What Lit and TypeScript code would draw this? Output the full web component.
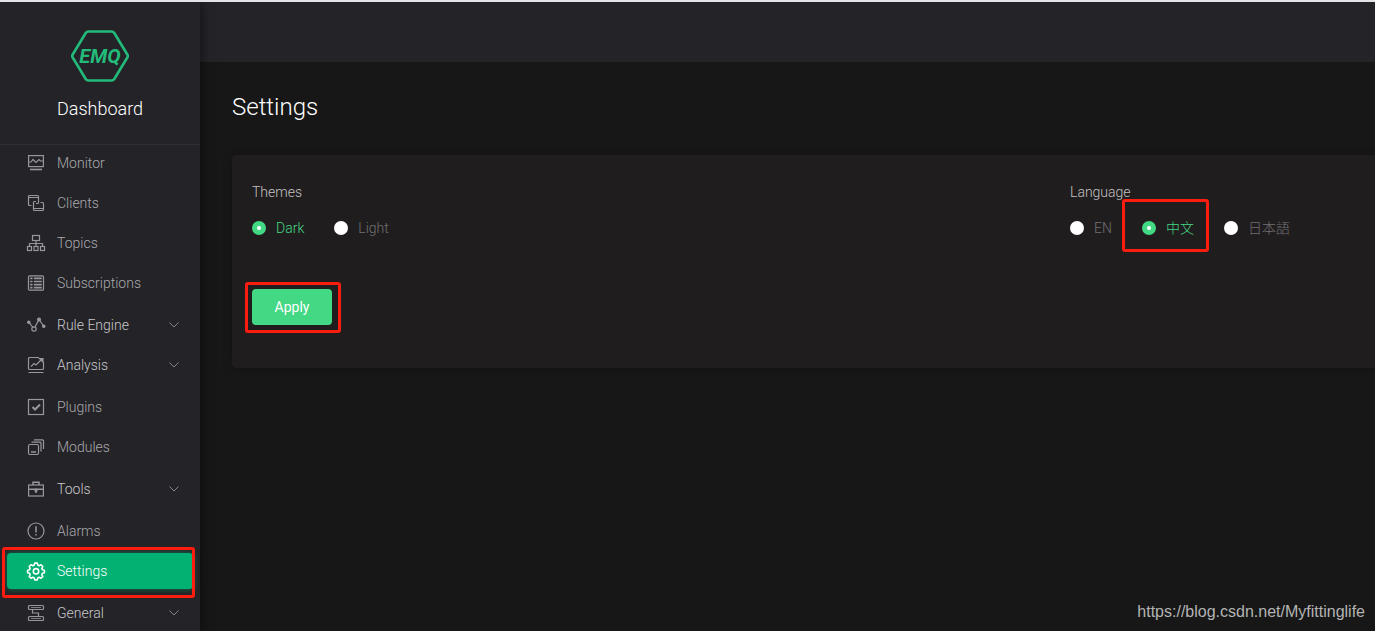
import { LitElement, html, css, svg } from "lit";
import { customElement, property, state } from "lit/decorators.js";
import { classMap } from "lit/directives/class-map.js";

const icons: Record<string, unknown> = {
  monitor: svg`<rect x=".6" y=".6" width="14.800" height="11"/><path d="M.6 7h2.400l2-2.500 3 3 3-3L12.500 6h3"/><path d="M2 14.500h12" stroke-width="1.600"/>`,
  clients: svg`<path d="M3.500 10.500h-2a1 1 0 0 1-1-1V1.500a1 1 0 0 1 1-1h8a1 1 0 0 1 1 1v6a1 1 0 0 1-1 1H8M.5 2.500h10"/><path d="M12.500 7.500h2a1 1 0 0 1 1 1v6a1 1 0 0 1-1 1h-8a1 1 0 0 1-1-1v-7a1 1 0 0 1 1-1H8M5.500 13.500h10"/>`,
  topics: svg`<rect x="4.500" y=".5" width="7" height="5"/><path d="M8 5.500v6M1.500 11.500v-3h13v3"/><rect x="-.5" y="11.500" width="4" height="4"/><rect x="6" y="11.500" width="4" height="4"/><rect x="12.500" y="11.500" width="4" height="4"/>`,
  subscriptions: svg`<rect x=".5" y=".8" width="15" height="14.400" rx="1"/><path d="M2.200 3.300h2.300M5.800 3.300h8M2.200 6.500h2.300M5.800 6.500h8M2.200 9.700h2.300M5.800 9.700h8M2.200 12.700h2.300M5.800 12.700h8" stroke-width="1.700"/>`,
  rule: svg`<path d="M.8 5.200L5 10.500M7 10l4-7.500 5 7"/><circle cx="6" cy="12" r="2.200"/><circle cx=".8" cy="5.200" r="1.200" fill="currentColor"/><circle cx="11" cy="2.500" r="1.400" fill="currentColor"/><circle cx="15.800" cy="9.200" r="1.200" fill="currentColor"/>`,
  analysis: svg`<path d="M11 .5H1.500a1 1 0 0 0-1 1v10a1 1 0 0 0 1 1h13a1 1 0 0 0 1-1V5M.5 15.500h15"/><path d="M3 9.500l3-3 2 1.500 5-5"/><path d="M11.500 1.500H15V5z" fill="currentColor"/>`,
  plugins: svg`<rect x=".5" y=".5" width="15" height="15"/><path d="M4.500 8l2.500 2.500 5-5" stroke-width="2"/>`,
  modules: svg`<rect x=".5" y="5.500" width="10" height="10" rx="1.500"/><path d="M3 13h5" stroke-width="1.500"/><path d="M3.500 3.200h8.500a1 1 0 0 1 1 1v8.300M6 .8h8.500a1 1 0 0 1 1 1V10"/>`,
  tools: svg`<rect x=".6" y="4" width="14.800" height="11"/><path d="M5 4V1.200h6V4M.5 8.300h15" stroke-width="1.500"/><path d="M6.500 9.800h3M8 7.500v4.500" stroke-width="1.600"/>`,
  alarms: svg`<circle cx="8" cy="8" r="8"/><path d="M8 3.200v6.300M8 11v1.600" stroke-width="1.500"/>`,
  settings: svg`<path d="M6.700.1h2.600l.5 2 1.300.6 1.900-1 1.800 1.800-1 1.900.6 1.300 2 .5v2.600l-2 .5-.6 1.300 1 1.900-1.800 1.800-1.900-1-1.300.6-.5 2H6.700l-.5-2-1.300-.6-1.900 1-1.800-1.800 1-1.900-.6-1.300-2-.5V7.200l2-.5.6-1.300-1-1.900L3 1.700l1.900 1 1.300-.6z" stroke-width="1.600" stroke-linejoin="round"/><circle cx="8" cy="8.300" r="2.700" stroke-width="1.600"/>`,
  general: svg`<rect x=".5" y=".5" width="15" height="4" rx="1"/><rect x=".5" y="11.500" width="15" height="4" rx="1"/><path d="M3 2.500h10M3 13.500h10" stroke-width=".8"/><path d="M4.500 4.500v3.500h6v3.500"/>`,
};

interface Item { label: string; icon: string; sub?: boolean; }
const groups: Item[][] = [
  [
    { label: "Monitor", icon: "monitor" },
    { label: "Clients", icon: "clients" },
    { label: "Topics", icon: "topics" },
    { label: "Subscriptions", icon: "subscriptions" },
  ],
  [
    { label: "Rule Engine", icon: "rule", sub: true },
    { label: "Analysis", icon: "analysis", sub: true },
  ],
  [
    { label: "Plugins", icon: "plugins" },
    { label: "Modules", icon: "modules" },
  ],
  [{ label: "Tools", icon: "tools", sub: true }],
  [
    { label: "Alarms", icon: "alarms" },
    { label: "Settings", icon: "settings" },
  ],
  [{ label: "General", icon: "general", sub: true }],
];

@customElement("side-bar")
class SideBar extends LitElement {
  @state() private current = "Settings";

  static styles = css`
    :host { display: block; background: #242328; box-shadow: 0 0 12px rgba(0, 0, 0, 0.6); z-index: 1; }
    .brand {
      display: flex; flex-direction: column; align-items: center; gap: 13px;
      box-sizing: border-box; height: 143px; padding-top: 28px; border-bottom: 1px solid #2f2e34;
    }
    .logo { width: 58px; height: 52px; display: block; }
    .logo-text { font: italic 700 20px Roboto, sans-serif; fill: #22bb7a; }
    .name { font-size: 18px; line-height: 28px; font-weight: 300; color: #fff; margin: 0; }
    nav { display: flex; flex-direction: column; gap: 6px; }
    ul { display: flex; flex-direction: column; gap: 4px; list-style: none; margin: 0; padding: 0; }
    li { padding: 0 7px; position: relative; }
    .item {
      display: flex; align-items: center; gap: 13px; width: 100%; height: 36px; box-sizing: border-box;
      padding: 0 14px 0 21px; border: 0; border-radius: 4px; background: none; cursor: pointer;
      font: 300 14px/20px Roboto, sans-serif; color: #a9a9ac; text-decoration: none; text-align: left;
    }
    .sub { color: #c8c8ca; }
    .active { background: #03b172; color: #fff; box-shadow: 0 0 6px rgba(3, 177, 114, 0.6); }
    .icon {
      width: 16px; height: 16px; flex: none; overflow: visible; fill: none;
      color: #97979c; stroke: currentColor; stroke-width: 1.200;
    }
    .active .icon { color: #fff; }
    .label { flex: 1; }
    .chevron { width: 10px; height: 6px; fill: none; stroke: #85858a; }
    .marked::after {
      content: ""; position: absolute; inset: -6px 5px -9px 2px; border: 3px solid #fd1d10;
      border-radius: 3px; pointer-events: none;
    }
  `;

  private renderItem(item: Item) {
    const active = item.label === this.current;
    const body = html`
      <svg class="icon" viewBox="0 0 16 16" aria-hidden="true">${icons[item.icon]}</svg>
      <span class="label">${item.label}</span>`;
    return html`<li class=${classMap({ marked: item.label === "Settings" })}>
      ${item.sub
        ? html`<button class="item sub" type="button" aria-expanded="false">${body}
            <svg class="chevron" viewBox="0 0 10 6" aria-hidden="true"><path d="M.5.5L5 5 9.500.5"/></svg></button>`
        : html`<a class=${classMap({ item: true, active })} href="#" @click=${(e: Event) => {
            e.preventDefault();
            this.current = item.label;
          }}>${body}</a>`}
    </li>`;
  }

  render() {
    return html`
      <div class="brand">
        <svg class="logo" viewBox="0 0 58 52" role="img" aria-label="EMQ">
          <path d="M17.500 1.500h23q1.800 0 2.800 1.500l13 21.500q.9 1.500 0 3L43.300 49q-1 1.500-2.800 1.500h-23q-1.800 0-2.800-1.500L1.700 27.500q-.9-1.500 0-3L14.700 3q1-1.500 2.800-1.500z" fill="none" stroke="#22bb7a" stroke-width="2.600"/>
          <text class="logo-text" x="29" y="33" text-anchor="middle">EMQ</text>
        </svg>
        <p class="name">Dashboard</p>
      </div>
      <nav>${groups.map((g) => html`<ul>${g.map((i) => this.renderItem(i))}</ul>`)}</nav>`;
  }
}

@customElement("radio-group")
class RadioGroup extends LitElement {
  @property() legend = "";
  @property() value = "";
  @property() marked = "";
  @property({ attribute: false }) options: string[] = [];

  static styles = css`
    :host { display: block; }
    fieldset { border: 0; margin: 0; padding: 0; min-width: 0; }
    legend { padding: 0; font-size: 14px; line-height: 20px; color: #c4c2c3; font-weight: 300; }
    .row { display: flex; gap: 30px; padding-top: 16px; }
    label {
      position: relative; display: flex; align-items: center; gap: 10px; cursor: pointer;
      font-size: 14px; line-height: 20px; color: #707072; white-space: nowrap;
    }
    .checked { color: #43d884; }
    input {
      appearance: none; box-sizing: border-box; width: 14px; height: 14px; margin: 0;
      border-radius: 50%; background: #fff;
    }
    input:checked { border: 5px solid #43d884; }
    .marked::after {
      content: ""; position: absolute; inset: -19px -15px -14px -20px; border: 3px solid #fd1d10;
      border-radius: 3px; pointer-events: none;
    }
  `;

  render() {
    return html`<fieldset>
      <legend>${this.legend}</legend>
      <div class="row">
        ${this.options.map((o) => html`
          <label class=${classMap({ checked: o === this.value, marked: o === this.marked })}>
            <input type="radio" name=${this.legend} .checked=${o === this.value} @change=${() => (this.value = o)} />
            <span>${o}</span>
          </label>`)}
      </div>
    </fieldset>`;
  }
}

@customElement("app-root")
class AppRoot extends LitElement {
  static styles = css`
    :host {
      display: grid; grid-template-columns: 200px 1fr; box-sizing: border-box; height: 100vh;
      position: relative; overflow: hidden; border-top: 2px solid #e3e4e6; background: #171717;
      font-family: Roboto, "Noto Sans CJK SC", sans-serif; font-weight: 300; color: #fff;
    }
    .top { height: 60px; background: #242328; }
    .content { padding: 28px 0 0 32px; }
    h1 { margin: 0; font-size: 24px; line-height: 34px; font-weight: 300; }
    .card {
      margin-top: 31px; padding: 27px 0 43px 20px; background: #201d1e;
      border-radius: 4px 0 0 4px; box-shadow: 0 1px 10px rgba(0, 0, 0, 0.2);
    }
    .fields { display: grid; grid-template-columns: 1fr 305px; }
    .action { position: relative; display: inline-flex; margin-top: 51px; }
    .action::after {
      content: ""; position: absolute; inset: -7px -9px -8px -7px; border: 3px solid #fd1d10;
      border-radius: 3px; pointer-events: none;
    }
    button {
      width: 80px; height: 36px; border: 0; border-radius: 4px; background: #43d884; color: #fff;
      font: 400 14px/20px Roboto, sans-serif; cursor: pointer;
    }
    .watermark {
      position: absolute; right: 10px; bottom: 9px; font: 400 16px/20px "Liberation Sans", sans-serif;
      color: #b4b4b4;
    }
  `;

  render() {
    return html`
      <side-bar></side-bar>
      <main>
        <div class="top"></div>
        <div class="content">
          <h1>Settings</h1>
          <form class="card" @submit=${(e: Event) => e.preventDefault()}>
            <div class="fields">
              <radio-group legend="Themes" value="Dark" .options=${["Dark", "Light"]}></radio-group>
              <radio-group legend="Language" value="中文" marked="中文" .options=${["EN", "中文", "日本語"]}></radio-group>
            </div>
            <div class="action"><button type="submit">Apply</button></div>
          </form>
        </div>
      </main>
      <div class="watermark">https://blog.csdn.net/Myfittinglife</div>`;
  }
}
